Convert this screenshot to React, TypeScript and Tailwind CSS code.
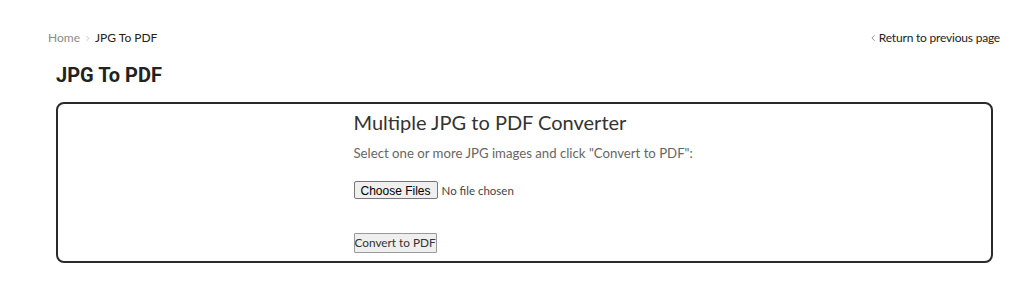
import React from "react";

function Chevron({ dir, className }: { dir: "left" | "right"; className?: string }) {
  return (
    <svg viewBox="0 0 6 10" className={className} fill="none" stroke="currentColor" strokeWidth="1.1">
      {dir === "right" ? <path d="M1.5 1.5 5 5 1.5 8.5" /> : <path d="M4.5 1.5 1 5 4.5 8.5" />}
    </svg>
  );
}

export default function App() {
  return (
    <div className="min-h-[286px] bg-white font-['Lato','Noto_Sans',sans-serif] text-[#333]">
      {/* breadcrumb row */}
      <div className="flex items-center justify-between pl-[48px] pr-[24px] pt-[30px] text-[12px] leading-[16px]">
        <nav className="flex items-center">
          <a className="text-[#8a8a8a]">Home</a>
          <Chevron dir="right" className="mx-[5px] h-[7px] w-[5px] text-[#b5b5b5]" />
          <span className="text-[#222]">JPG To PDF</span>
        </nav>
        <a className="flex items-center text-[#222]">
          <Chevron dir="left" className="mr-[3px] h-[8px] w-[5px] text-[#888]" />
          <span className="tracking-[-0.2px]">Return to previous page</span>
        </a>
      </div>

      <h1 className="mt-[17px] pl-[56px] font-['Roboto',sans-serif] text-[20px] font-bold leading-[24px] text-[#222]">
        JPG To PDF
      </h1>

      {/* converter card */}
      <div className="ml-[56px] mr-[31px] mt-[15px] h-[161px] rounded-[8px] border-2 border-[#2a2a2a] pt-[6px]">
        <div className="mx-auto w-[340px] -translate-x-[1px]">
          <h2 className="whitespace-nowrap text-[20px] leading-[24px] text-[#333]">
            Multiple JPG to PDF Converter
          </h2>
          <p className="mt-[10px] whitespace-nowrap text-[13.2px] leading-[18px] text-[#666]">
            Select one or more JPG images and click "Convert to PDF":
          </p>
          <input
            type="file"
            multiple
            accept="image/jpeg"
            className="mt-[19px] block h-[18px] text-[11.5px] leading-[18px] text-[#444] file:mr-[4px] file:h-[18px] file:rounded-[2px] file:border file:border-[#767676] file:bg-[#efefef] file:px-[6px] file:font-['Liberation_Sans',Arial,sans-serif] file:text-[12px] file:text-black"
          />
          <button className="mt-[34px] block h-[20px] rounded-[1px] border border-[#999] bg-[#efefef] px-0 text-[11.8px] leading-[18px] text-[#333]">
            Convert to PDF
          </button>
        </div>
      </div>
    </div>
  );
}
